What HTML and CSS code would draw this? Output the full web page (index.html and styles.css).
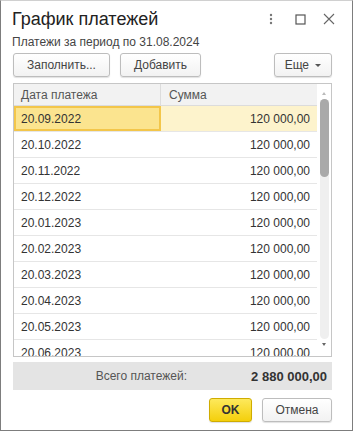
FILE: index.html
```html
<!DOCTYPE html>
<html lang="ru">
<head>
    <meta charset="UTF-8">
    <title>График платежей</title>
    <link rel="stylesheet" href="styles.css">
</head>
<body>
    <div class="window">
        <div class="title-bar">
            <h1 class="title">График платежей</h1>
            <div class="win-buttons">
                <svg width="4" height="12" viewBox="0 0 4 12"><circle cx="2" cy="2" r="1.2" fill="#777"/><circle cx="2" cy="6" r="1.2" fill="#777"/><circle cx="2" cy="10" r="1.2" fill="#777"/></svg>
                <svg width="11" height="11" viewBox="0 0 11 11"><rect x="1" y="1" width="9" height="9" fill="none" stroke="#555" stroke-width="1.2"/></svg>
                <svg width="12" height="12" viewBox="0 0 12 12"><path d="M1 1 L11 11 M11 1 L1 11" stroke="#666" stroke-width="1.1"/></svg>
            </div>
        </div>
        <div class="subtitle">Платежи за период по 31.08.2024</div>

        <div class="toolbar">
            <button class="btn btn-fill">Заполнить...</button>
            <button class="btn btn-add">Добавить</button>
            <div class="spacer"></div>
            <button class="btn btn-more">Еще <span class="caret"></span></button>
        </div>

        <div class="table">
            <div class="table-body">
                <div class="row head">
                    <div class="cell c-date">Дата платежа</div>
                    <div class="cell c-sum">Сумма</div>
                </div>
                <div class="row selected">
                    <div class="cell c-date">20.09.2022</div>
                    <div class="cell c-sum">120 000,00</div>
                </div>
                <div class="row"><div class="cell c-date">20.10.2022</div><div class="cell c-sum">120 000,00</div></div>
                <div class="row"><div class="cell c-date">20.11.2022</div><div class="cell c-sum">120 000,00</div></div>
                <div class="row"><div class="cell c-date">20.12.2022</div><div class="cell c-sum">120 000,00</div></div>
                <div class="row"><div class="cell c-date">20.01.2023</div><div class="cell c-sum">120 000,00</div></div>
                <div class="row"><div class="cell c-date">20.02.2023</div><div class="cell c-sum">120 000,00</div></div>
                <div class="row"><div class="cell c-date">20.03.2023</div><div class="cell c-sum">120 000,00</div></div>
                <div class="row"><div class="cell c-date">20.04.2023</div><div class="cell c-sum">120 000,00</div></div>
                <div class="row"><div class="cell c-date">20.05.2023</div><div class="cell c-sum">120 000,00</div></div>
                <div class="row"><div class="cell c-date">20.06.2023</div><div class="cell c-sum">120 000,00</div></div>
            </div>
            <div class="scrollbar">
                <span class="arrow up"></span>
                <div class="track"><div class="thumb"></div></div>
                <span class="arrow down"></span>
            </div>
        </div>

        <div class="footer">
            <div class="total-label">Всего платежей:</div>
            <div class="total-value">2 880 000,00</div>
        </div>

        <div class="actions">
            <button class="btn btn-ok">OK</button>
            <button class="btn btn-cancel">Отмена</button>
        </div>
    </div>
</body>
</html>
```

FILE: styles.css
```css
body { margin: 0; padding: 0; background: #fff; font-family: "Liberation Sans", Arial, sans-serif; color: #333; }
.window { box-sizing: border-box; width: 353px; height: 431px; border: 1px solid #7d7d7d; border-top-color: #d0d0d0; padding: 0 20px 0 11px; display: flex; flex-direction: column; background: #fff; overflow: hidden; }
.title-bar { display: flex; align-items: center; height: 24px; margin-top: 6px; }
.title { flex-grow: 1; margin: 0; font-size: 18px; font-weight: normal; color: #222; line-height: 24px; }
.win-buttons { display: flex; align-items: center; margin-right: -3px; }
.win-buttons svg { display: block; }
.win-buttons svg:nth-child(1) { margin-right: 22px; }
.win-buttons svg:nth-child(2) { margin-right: 17px; }
.subtitle { font-size: 12px; color: #444; margin-top: 3px; line-height: 16px; }

.toolbar { display: flex; margin-top: 3px; height: 24px; gap: 10px; }
.spacer { flex-grow: 1; }
.btn { box-sizing: border-box; height: 24px; font-family: "Liberation Sans", Arial, sans-serif; font-size: 12px; color: #444; background: linear-gradient(#ffffff, #f2f2f2); border: 1px solid #bdbdbd; border-radius: 3px; box-shadow: 0 1px 1px rgba(0,0,0,0.12); padding: 0 10px; cursor: pointer; }
.btn-fill { width: 97px; margin-left: 1px; }
.btn-add { width: 81px; }
.btn-more { width: 58px; padding: 0 8px; }
.caret { display: inline-block; width: 0; height: 0; border-left: 3px solid transparent; border-right: 3px solid transparent; border-top: 3px solid #555; vertical-align: middle; margin-left: 3px; }

.table { box-sizing: border-box; margin-top: 6px; margin-left: 1px; height: 274px; border: 1px solid #c6c6c6; display: flex; overflow: hidden; }
.table-body { flex-grow: 1; overflow: hidden; }
.row { display: flex; height: 25px; border-bottom: 1px solid #e6e6e6; font-size: 12px; color: #333; }
.row.head { height: 21px; background: #f2f2f2; border-bottom: 1px solid #dcdcdc; color: #555; }
.cell { box-sizing: border-box; display: flex; align-items: center; padding: 0 6px; }
.c-date { width: 147px; padding-left: 7px; }
.c-sum { flex-grow: 1; justify-content: flex-end; padding-right: 7px; }
.row.head .c-date { border-right: 1px solid #dcdcdc; padding-left: 7px; }
.row.head .c-sum { justify-content: flex-start; padding-left: 8px; }
.row.selected .c-date { background: #fbe48f; border: 2px solid #f3c64a; padding-left: 5px; }
.row.selected .c-sum { background: #fdf3cc; }

.scrollbar { width: 14px; display: flex; flex-direction: column; align-items: center; background: #fff; }
.arrow { display: block; width: 0; height: 0; border-left: 2.5px solid transparent; border-right: 2.5px solid transparent; }
.arrow.up { border-bottom: 3px solid #bbb; margin-top: 8px; }
.arrow.down { border-top: 3px solid #666; margin-bottom: 10px; }
.track { flex-grow: 1; width: 9px; margin: 4px 0; background: #efefef; border-radius: 5px; }
.thumb { width: 9px; height: 78px; background: #a9a9a9; border-radius: 5px; }

.footer { display: flex; align-items: center; margin-top: 5px; margin-left: 1px; height: 28px; background: #e4e4e4; font-size: 12px; }
.total-label { width: 174px; text-align: right; color: #555; }
.total-value { flex-grow: 1; text-align: right; padding-right: 5px; font-size: 13px; font-weight: bold; color: #333; }

.actions { display: flex; justify-content: flex-end; gap: 10px; margin-top: 8px; }
.btn-ok { width: 43px; padding: 0; font-weight: bold; color: #333; background: linear-gradient(#fde95c, #f4cf0b); border-color: #cfac00; }
.btn-cancel { width: 70px; padding: 0; }
```
